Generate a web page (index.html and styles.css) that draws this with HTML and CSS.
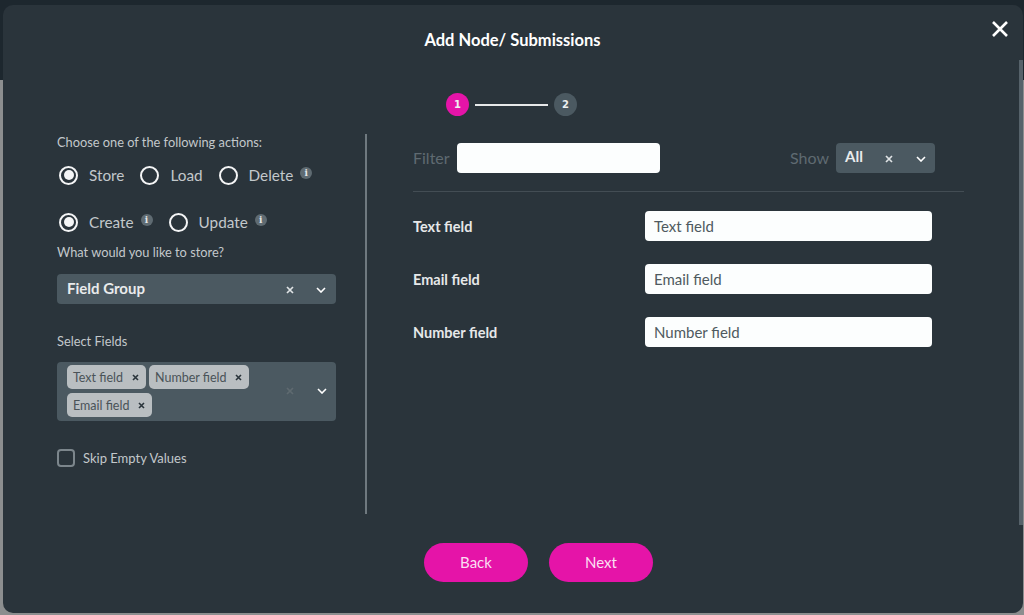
FILE: index.html
```html
<!DOCTYPE html>
<html lang="en">
<head>
<meta charset="utf-8">
<title>Add Node/ Submissions</title>
<link rel="stylesheet" href="styles.css">
</head>
<body>
<div class="modal">
  <svg class="close" width="18" height="18" viewBox="0 0 18 18"><path d="M2 2L16 16M16 2L2 16" stroke="#fff" stroke-width="2.6" fill="none"/></svg>
  <div class="scrollbar"></div>
  <h1 class="title">Add Node/ Submissions</h1>
  <div class="stepper">
    <span class="step active">1</span>
    <span class="step-line"></span>
    <span class="step">2</span>
  </div>
  <div class="columns">
    <div class="left">
      <p class="label first">Choose one of the following actions:</p>
      <div class="radios r1">
        <span class="radio"><i class="dot on"></i>Store</span>
        <span class="radio"><i class="dot"></i>Load</span>
        <span class="radio"><i class="dot"></i>Delete<b class="info">i</b></span>
      </div>
      <div class="radios r2">
        <span class="radio"><i class="dot on"></i>Create<b class="info">i</b></span>
        <span class="radio"><i class="dot"></i>Update<b class="info">i</b></span>
      </div>
      <p class="label store">What would you like to store?</p>
      <div class="select single">
        <span class="value">Field Group</span>
        <svg class="x" width="8" height="8" viewBox="0 0 8 8"><path d="M1 1L7 7M7 1L1 7" stroke="#dfe3e5" stroke-width="1.7"/></svg>
        <svg class="chev" width="10" height="6" viewBox="0 0 10 6"><path d="M1 1L5 5L9 1" stroke="#fff" stroke-width="1.6" fill="none"/></svg>
      </div>
      <p class="label fields">Select Fields</p>
      <div class="select multi">
        <div class="tags">
          <span class="tag">Text field<svg width="7" height="7" viewBox="0 0 7 7"><path d="M1 1L6 6M6 1L1 6" stroke="#2a343b" stroke-width="1.6"/></svg></span>
          <span class="tag">Number field<svg width="7" height="7" viewBox="0 0 7 7"><path d="M1 1L6 6M6 1L1 6" stroke="#2a343b" stroke-width="1.6"/></svg></span>
          <span class="tag">Email field<svg width="7" height="7" viewBox="0 0 7 7"><path d="M1 1L6 6M6 1L1 6" stroke="#2a343b" stroke-width="1.6"/></svg></span>
        </div>
        <svg class="x" width="8" height="8" viewBox="0 0 8 8"><path d="M1 1L7 7M7 1L1 7" stroke="#5f6a70" stroke-width="1.7"/></svg>
        <svg class="chev" width="10" height="6" viewBox="0 0 10 6"><path d="M1 1L5 5L9 1" stroke="#fff" stroke-width="1.6" fill="none"/></svg>
      </div>
      <div class="skip"><i class="check"></i>Skip Empty Values</div>
    </div>
    <div class="right">
      <div class="filterbar">
        <span class="muted">Filter</span>
        <span class="filter-input"></span>
        <span class="muted show">Show</span>
        <div class="select small">
          <span class="value">All</span>
          <svg class="x" width="8" height="8" viewBox="0 0 8 8"><path d="M1 1L7 7M7 1L1 7" stroke="#dfe3e5" stroke-width="1.7"/></svg>
          <svg class="chev" width="10" height="6" viewBox="0 0 10 6"><path d="M1 1L5 5L9 1" stroke="#fff" stroke-width="1.6" fill="none"/></svg>
        </div>
      </div>
      <div class="rows">
        <div class="row"><span class="row-label">Text field</span><span class="input">Text field</span></div>
        <div class="row"><span class="row-label">Email field</span><span class="input">Email field</span></div>
        <div class="row"><span class="row-label">Number field</span><span class="input">Number field</span></div>
      </div>
    </div>
  </div>
  <div class="actions">
    <span class="btn">Back</span>
    <span class="btn">Next</span>
  </div>
</div>
</body>
</html>
```

FILE: styles.css
```css
* { box-sizing: border-box; }
html, body { margin: 0; height: 100%; }
body {
  background: linear-gradient(#1d272e 0, #1d272e 80px, #8c8e8f 80px, #8c8e8f 100%);
  font-family: Lato, "Open Sans", sans-serif;
  overflow: hidden;
  padding: 5px 1px 2px 3px;
}
.modal {
  position: relative;
  height: 608px;
  background: #2a343b;
  border-radius: 10px;
}
.close { position: absolute; left: 988px; top: 15px; }
.scrollbar { position: absolute; right: 0; top: 55px; width: 4px; height: 465px; background: #56626a; }
.title {
  margin: 0;
  padding: 26px 1px 0 0;
  text-align: center;
  font-size: 16.5px;
  line-height: 19px;
  font-weight: 700;
  color: #fff;
}
.stepper {
  display: flex;
  align-items: center;
  gap: 6px;
  margin: 43px 0 0 443px;
}
.step {
  width: 23px; height: 23px; border-radius: 50%;
  background: #4b5961; color: #eef0f1;
  display: flex; align-items: center; justify-content: center;
  font: 700 10px "DejaVu Sans", sans-serif;
}
.step.active { background: #e514a8; }
.step-line { width: 73px; height: 2px; background: #e6e8e9; }
.columns { display: flex; margin-top: 18px; height: 380px; }
.left { width: 364px; padding-left: 54px; border-right: 2px solid #6f797f; }
.label { margin: 0; font-size: 12.8px; line-height: 16px; color: #c3c8cb; }
.radios { display: flex; align-items: center; padding-left: 2px; color: #c3c8cb; font-size: 15.3px; line-height: 20px; gap: 16px; }
.r1 { margin-top: 15px; }
.r2 { margin-top: 27px; }
.radio { display: flex; align-items: center; }
.dot {
  width: 19px; height: 19px; border: 2px solid #f4f5f6; border-radius: 50%;
  margin-right: 11px; position: relative; display: block;
}
.dot.on::after {
  content: ""; position: absolute; left: 2.5px; top: 2.5px; width: 10px; height: 10px;
  border-radius: 50%; background: #f4f5f6;
}
.info {
  width: 12px; height: 12px; border-radius: 50%; background: #5f6b72; color: #e5e7e8;
  font: 700 9px/12px "DejaVu Serif", serif; text-align: center; margin: -4px 0 0 7px; display: block;
}
.label.store { margin-top: 12px; }
.select {
  background: #4b5961; border-radius: 4px; display: flex; align-items: center; color: #fff; position: relative;
}
.select.single { width: 279px; height: 30px; margin-top: 14px; padding: 0 10px; }
.value { font-size: 15px; font-weight: 700; color: #e9ebec; flex: 1; }
.single .value { margin-top: -3px; }
.single .x { margin: 2px 22px 0 0; }
.single .chev { margin: 2px 0 0 0; }
.label.fields { margin-top: 29px; }
.select.multi { width: 279px; height: 59px; margin-top: 13px; padding: 3px 9px 4px 10px; }
.tags { display: flex; flex-wrap: wrap; gap: 4px 3px; width: 200px; flex: none; margin-right: 19px; }
.tag {
  height: 24px; background: #b9bec1; color: #4a5358; border-radius: 5px; font-size: 12.5px;
  display: flex; align-items: center; padding: 0 7px 0 6px; gap: 9px;
}
.multi .x { margin: 0 23px 0 0; flex: none; }
.multi .chev { flex: none; }
.skip { display: flex; align-items: center; margin-top: 28px; font-size: 13px; line-height: 16px; color: #c3c8cb; }
.check { width: 18px; height: 18px; border: 2px solid #7c868c; border-radius: 4px; margin-right: 8px; display: block; }
.right { width: 551px; margin-left: 46px; }
.filterbar { display: flex; align-items: center; height: 58px; border-bottom: 1px solid #434d54; padding: 1px 0 10px; }
.muted { font-size: 16px; color: #5f6a71; margin-top: -2px; }
.filter-input { width: 203px; height: 30px; background: #fcfefe; border-radius: 4px; margin-left: 7px; }
.show { margin-left: auto; margin-right: 7px; }
.select.small { width: 99px; height: 30px; margin-right: 29px; padding: 0 9px; }
.small .value { font-size: 15px; margin-top: -4px; }
.small .x { margin: 2px 23px 0 0; }
.small .chev { margin: 2px 0 0 0; }
.rows { padding-top: 19px; display: flex; flex-direction: column; gap: 23px; }
.row { display: flex; align-items: center; height: 30px; }
.row-label { width: 232px; font-size: 14.5px; font-weight: 700; color: #e6e8e9; }
.input {
  width: 287px; height: 30px; background: #fcfefe; border-radius: 4px; color: #4f5a60;
  font-size: 15px; display: flex; align-items: center; padding-left: 9px;
}
.actions { display: flex; gap: 21px; margin-top: 29px; padding-left: 421px; }
.btn {
  width: 104px; height: 39px; border-radius: 20px; background: #e514a8; color: #fbdff2;
  font-size: 15px; display: flex; align-items: center; justify-content: center; padding-bottom: 1px;
}
```
